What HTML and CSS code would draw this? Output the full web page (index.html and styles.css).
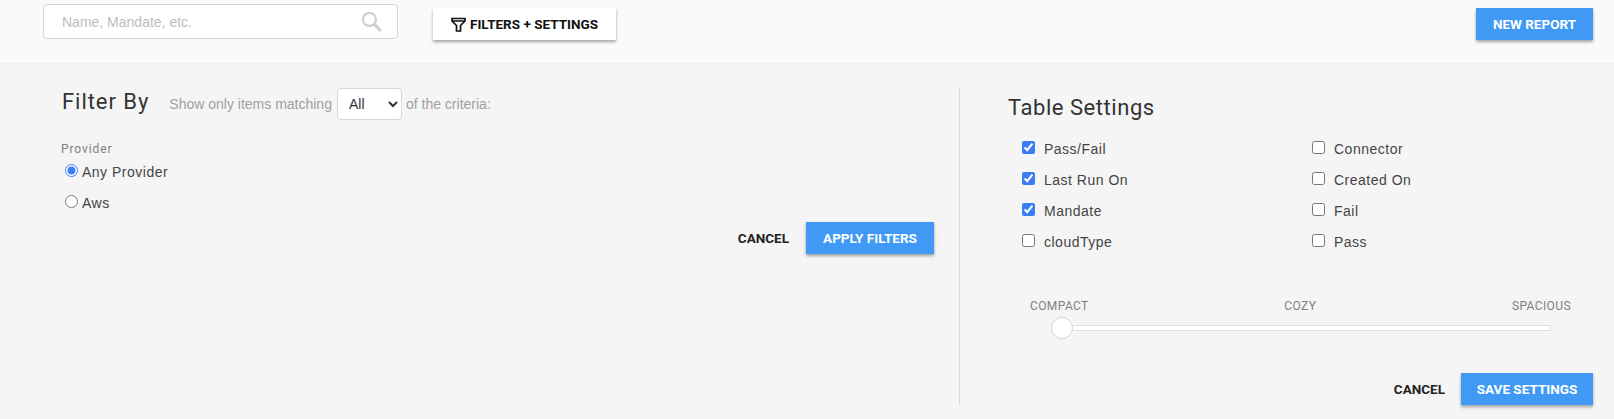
FILE: index.html
```html
<!DOCTYPE html>
<html lang="en">
<head>
<meta charset="UTF-8">
<title>Reports</title>
<link rel="stylesheet" href="styles.css">
</head>
<body>
<div class="topbar">
	<div class="search">
		<input class="search-input" type="text" placeholder="Name, Mandate, etc.">
		<svg class="search-icon" width="21" height="21" viewBox="0 0 20 20">
			<circle cx="8" cy="8" r="6.2" fill="none" stroke="#cfcfcf" stroke-width="2.2"></circle>
			<path d="M12.6 12.6L19 19" stroke="#cfcfcf" stroke-width="3" fill="none"></path>
		</svg>
	</div>
	<button class="btn btn-white">
		<svg class="funnel" width="15" height="15" viewBox="0 0 15 15">
			<path d="M1 1.5H14V4L9.5 8.5V14H5.5V8.5L1 4Z M1 4H14" fill="none" stroke="#111" stroke-width="1.7"></path>
		</svg>
		FILTERS + SETTINGS
	</button>
	<button class="btn btn-blue new-report">NEW REPORT</button>
</div>
<div class="panels">
	<div class="filter-panel">
		<div class="filter-head">
			<h2 class="title">Filter By</h2>
			<span class="hint">Show only items matching</span>
			<select class="match-select">
				<option>All</option>
				<option>Any</option>
			</select>
			<span class="hint">of the criteria:</span>
		</div>
		<div class="group-label">Provider</div>
		<label class="radio-row"><input type="radio" name="provider" checked>Any Provider</label>
		<label class="radio-row"><input type="radio" name="provider">Aws</label>
		<div class="actions filter-actions">
			<a class="cancel">CANCEL</a>
			<button class="btn btn-blue apply">APPLY FILTERS</button>
		</div>
	</div>
	<div class="settings-panel">
		<h2 class="title title-settings">Table Settings</h2>
		<div class="columns">
			<label class="check-row"><input type="checkbox" checked>Pass/Fail</label>
			<label class="check-row"><input type="checkbox">Connector</label>
			<label class="check-row"><input type="checkbox" checked>Last Run On</label>
			<label class="check-row"><input type="checkbox">Created On</label>
			<label class="check-row"><input type="checkbox" checked>Mandate</label>
			<label class="check-row"><input type="checkbox">Fail</label>
			<label class="check-row"><input type="checkbox">cloudType</label>
			<label class="check-row"><input type="checkbox">Pass</label>
		</div>
		<div class="density">
			<div class="density-labels">
				<span>COMPACT</span>
				<span>COZY</span>
				<span>SPACIOUS</span>
			</div>
			<div class="slider">
				<div class="slider-track"></div>
				<div class="slider-thumb"></div>
			</div>
		</div>
		<div class="actions settings-actions">
			<a class="cancel">CANCEL</a>
			<button class="btn btn-blue save">SAVE SETTINGS</button>
		</div>
	</div>
</div>
</body>
</html>
```

FILE: styles.css
```css
html,body{
	margin: 0;
	padding: 0;
	background: #f5f5f5;
}
body{
	width: 1614px;
	height: 419px;
	overflow: hidden;
	font-family: "Liberation Sans", Arial, sans-serif;
}
input{
	accent-color: #3b7df6;
}
.topbar{
	height: 63px;
	box-sizing: border-box;
	padding: 4px 21px 0 43px;
	display: flex;
	align-items: flex-start;
	background: #fafafa;
	box-shadow: 0 1px 1px rgba(0,0,0,0.02);
}
.search{
	width: 355px;
	height: 35px;
	box-sizing: border-box;
	border: 1px solid #d6d6d6;
	border-radius: 4px;
	background: #fff;
	display: flex;
	align-items: center;
	padding: 0 15px 0 18px;
}
.search-input{
	flex: 1;
	min-width: 0;
	border: 0;
	padding: 0;
	outline: none;
	background: transparent;
	font-family: "Liberation Sans", Arial, sans-serif;
	font-size: 14px;
}
.search-input::placeholder{
	color: #bdbdbd;
	opacity: 1;
}
.btn{
	height: 32px;
	border: 0;
	border-radius: 0;
	padding: 0;
	font-family: Roboto, sans-serif;
	font-size: 13.5px;
	font-weight: 700;
	letter-spacing: 0;
	box-shadow: 0 2px 3px rgba(0,0,0,0.35);
}
.btn-white{
	width: 183px;
	margin: 4px 0 0 35px;
	background: #fff;
	color: #111;
	display: flex;
	align-items: center;
	justify-content: center;
	gap: 4px;
}
.btn-blue{
	background: #4099f5;
	color: #fff;
}
.new-report{
	width: 117px;
	margin: 4px 0 0 auto;
}
.panels{
	display: flex;
	height: 356px;
}
.filter-panel{
	width: 959px;
	box-sizing: border-box;
	padding: 25px 25px 0 61px;
}
.filter-head{
	display: flex;
	align-items: center;
	height: 32px;
}
.title{
	margin: 0;
	font-family: Roboto, sans-serif;
	font-size: 22px;
	font-weight: 400;
	letter-spacing: 0.55px;
	color: #333;
}
.hint{
	font-size: 14px;
	color: #a0a0a0;
}
.filter-head .title{
	margin: 0 20px 5px 1px;
	letter-spacing: 0.95px;
}
.match-select{
	width: 65px;
	height: 32px;
	margin: 0 4px 0 5px;
	border: 1px solid #d8d8d8;
	border-radius: 4px;
	background-color: #fff;
	padding-left: 7px;
	font-family: "Liberation Sans", Arial, sans-serif;
	font-size: 14px;
	color: #333;
}
.group-label{
	margin-top: 22px;
	font-family: Roboto, sans-serif;
	font-size: 12px;
	letter-spacing: 0.9px;
	color: #808080;
}
.radio-row{
	display: flex;
	align-items: center;
	height: 31px;
	margin-left: 4px;
	font-size: 14px;
	letter-spacing: 0.5px;
	color: #444;
}
.radio-row input{
	margin: 0 4px 2px 0;
}
.actions{
	display: flex;
	align-items: center;
	justify-content: flex-end;
}
.cancel{
	font-family: Roboto, sans-serif;
	font-size: 13.5px;
	font-weight: 700;
	letter-spacing: 0;
	color: #222;
}
.filter-actions{
	margin-top: 4px;
	gap: 17px;
}
.apply{
	width: 128px;
}
.settings-panel{
	flex: 1;
	margin-top: 24px;
	height: 318px;
	box-sizing: border-box;
	border-left: 1px solid #dcdcdc;
	padding: 0 21px 0 48px;
}
.title-settings{
	margin-top: 8px;
}
.columns{
	display: grid;
	grid-template-columns: 290px 1fr;
	grid-auto-rows: 31px;
	margin: 13px 0 0 14px;
}
.check-row{
	display: flex;
	align-items: center;
	font-size: 14px;
	letter-spacing: 0.5px;
	color: #444;
}
.check-row input{
	margin: 0 9px 2px 0;
}
.density{
	margin: 42px 0 0 22px;
	width: 541px;
}
.density-labels{
	display: flex;
	justify-content: space-between;
	font-family: Roboto, sans-serif;
	font-size: 12px;
	letter-spacing: 0.4px;
	color: #808080;
}
.slider{
	position: relative;
	height: 22px;
	margin: 4px 20px 0 21px;
	display: flex;
	align-items: center;
}
.slider-track{
	width: 100%;
	height: 6px;
	box-sizing: border-box;
	background: #fff;
	border: 1px solid #dedede;
}
.slider-thumb{
	position: absolute;
	left: 0;
	top: 0;
	width: 22px;
	height: 22px;
	box-sizing: border-box;
	border: 1px solid #d4d4d4;
	border-radius: 50%;
	background: #fff;
}
.settings-actions{
	margin-top: 34px;
	gap: 16px;
}
.save{
	width: 132px;
}
```
